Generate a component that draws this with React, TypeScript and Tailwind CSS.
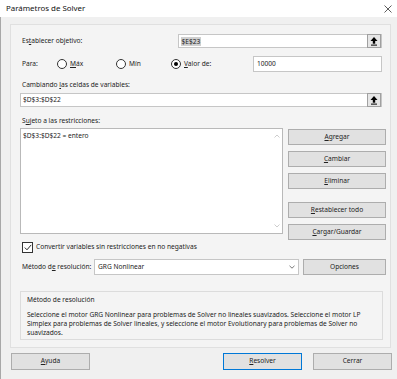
import React from "react";

function U({ children }: { children: React.ReactNode }) {
  return <span className="underline underline-offset-1 decoration-[0.5px]">{children}</span>;
}

function UpArrowBtn() {
  return (
    <div className="w-[14px] h-[14px] border border-[#a0a0a0] bg-[#e6e6e6] flex items-center justify-center shrink-0">
      <svg width="8" height="9" viewBox="0 0 8 9">
        <polygon points="4,0 0.5,4 7.5,4" fill="#000" />
        <rect x="2.8" y="3.5" width="2.4" height="3.2" fill="#000" />
        <rect x="1" y="7.6" width="6" height="1" fill="#000" />
      </svg>
    </div>
  );
}

function Radio({ checked }: { checked?: boolean }) {
  return (
    <div className="w-[10px] h-[10px] rounded-full border border-[#333] bg-white flex items-center justify-center shrink-0">
      {checked && <div className="w-[4px] h-[4px] rounded-full bg-black" />}
    </div>
  );
}

function Btn({ children, className = "" }: { children: React.ReactNode; className?: string }) {
  return (
    <div
      className={
        "h-[16px] bg-[#e1e1e1] border border-[#adadad] flex items-center justify-center " +
        className
      }
    >
      {children}
    </div>
  );
}

export default function App() {
  return (
    <div className="w-[397px] h-[379px] bg-[#f0f0f0] flex flex-col overflow-hidden font-['Noto_Sans',sans-serif] text-[#222] text-[6.6px] leading-none">
      {/* Title bar */}
      <div className="h-[17px] bg-white flex items-center justify-between pl-[6px] pr-[4px] shrink-0">
        <span className="text-[7.9px] text-[#111]">Parámetros de Solver</span>
        <svg width="8" height="8" viewBox="0 0 8 8" className="mr-[1px]">
          <path d="M0.5 0.5 L7.5 7.5 M7.5 0.5 L0.5 7.5" stroke="#333" strokeWidth="0.8" />
        </svg>
      </div>

      {/* Body */}
      <div className="flex-1 flex flex-col border-l border-[#a8a8a8] pl-[9px] pt-[7px]">
        {/* Panel */}
        <div className="w-[381px] h-[324px] border border-[#e0e0e0] bg-[#f4f4f4] flex flex-col pl-[9px] pt-[9px] shrink-0">
          {/* Row 1 */}
          <div className="flex items-center h-[14px]">
            <div className="w-[158px] pl-[2px] whitespace-nowrap">
              <span>
                Es<U>t</U>ablecer objetivo:
              </span>
            </div>
            <div className="w-[204px] h-[14px] border border-[#c6c6c6] bg-white flex items-center justify-between">
              <span className="ml-[2px] bg-[#cfcfcf] px-[0.5px] leading-[9px]">$E$23</span>
              <UpArrowBtn />
            </div>
          </div>

          {/* Row 2 */}
          <div className="flex items-center h-[16px] mt-[8px]">
            <div className="w-[37px] pl-[2px]">Para:</div>
            <Radio />
            <span className="ml-[3px] w-[46px]">
              <U>M</U>áx
            </span>
            <Radio />
            <span className="ml-[3px] w-[42px]">Mín</span>
            <Radio checked />
            <span className="ml-[3px] w-[69px]">
              <U>V</U>alor de:
            </span>
            <div className="w-[129px] h-[16px] border border-[#c6c6c6] bg-white flex items-center pl-[3px]">
              10000
            </div>
          </div>

          {/* Cambiando */}
          <div className="h-[10px] mt-[8px] pl-[2px] flex items-center whitespace-nowrap">
            <span>
              Cambiando <U>l</U>as celdas de variables:
            </span>
          </div>
          <div className="w-[362px] h-[14px] mt-[3px] border border-[#c6c6c6] bg-white flex items-center justify-between">
            <span className="ml-[2px]">$D$3:$D$22</span>
            <UpArrowBtn />
          </div>

          {/* Sujeto */}
          <div className="h-[10px] mt-[9px] pl-[2px] flex items-center whitespace-nowrap">
            <span>
              S<U>u</U>jeto a las restricciones:
            </span>
          </div>
          <div className="flex items-start mt-[2px]">
            <div className="w-[263px] h-[106px] border border-[#b9b9b9] bg-white flex">
              <div className="flex-1 pl-[2px] pt-[4px]">$D$3:$D$22 = entero</div>
              <div className="w-[11px] flex flex-col items-center justify-between py-[5px]">
                <svg width="6" height="4" viewBox="0 0 6 4">
                  <path d="M0.5 3.5 L3 1 L5.5 3.5" stroke="#c0c0c0" strokeWidth="0.8" fill="none" />
                </svg>
                <svg width="6" height="4" viewBox="0 0 6 4">
                  <path d="M0.5 0.5 L3 3 L5.5 0.5" stroke="#c0c0c0" strokeWidth="0.8" fill="none" />
                </svg>
              </div>
            </div>
            <div className="ml-[5px] w-[98px] flex flex-col">
              <Btn className="mt-[1px]">
                <span>
                  <U>A</U>gregar
                </span>
              </Btn>
              <Btn className="mt-[6px]">
                <span>
                  <U>C</U>ambiar
                </span>
              </Btn>
              <Btn className="mt-[6px]">
                <span>
                  <U>E</U>liminar
                </span>
              </Btn>
              <Btn className="mt-[13px]">
                <span>
                  <U>R</U>establecer todo
                </span>
              </Btn>
              <Btn className="mt-[6px]">
                <span>
                  <U>C</U>argar/Guardar
                </span>
              </Btn>
            </div>
          </div>

          {/* Checkbox */}
          <div className="flex items-center h-[11px] mt-[2px] pl-[2px]">
            <div className="w-[11px] h-[11px] border border-[#333] bg-white flex items-center justify-center shrink-0">
              <svg width="8" height="7" viewBox="0 0 8 7">
                <path d="M0.8 3.6 L3 5.8 L7.2 0.9" stroke="#111" strokeWidth="0.9" fill="none" />
              </svg>
            </div>
            <span className="ml-[3px] whitespace-nowrap">Convertir variables sin restricciones en no negativas</span>
          </div>

          {/* Método */}
          <div className="flex items-center h-[16px] mt-[6px]">
            <div className="w-[74px] pl-[2px] whitespace-nowrap">
              <span>
                Método d<U>e</U> resolución:
              </span>
            </div>
            <div className="w-[205px] h-[16px] border border-[#c6c6c6] bg-white flex items-center justify-between">
              <span className="ml-[3px]">GRG Nonlinear</span>
              <div className="w-[13px] h-full flex items-center justify-center">
                <svg width="6" height="4" viewBox="0 0 6 4">
                  <path d="M0.5 0.8 L3 3.2 L5.5 0.8" stroke="#555" strokeWidth="0.8" fill="none" />
                </svg>
              </div>
            </div>
            <Btn className="ml-[4px] w-[83px]">Opciones</Btn>
          </div>

          {/* Group box */}
          <div className="w-[363px] h-[49px] mt-[16px] border border-[#dcdcdc] flex flex-col pl-[6px] pr-[14px] pt-[4px]">
            <div className="h-[8px] flex items-center">Método de resolución</div>
            <div className="mt-[6px] leading-[9px]">
              Seleccione el motor GRG Nonlinear para problemas de Solver no lineales suavizados. Seleccione el motor LP Simplex para problemas de Solver lineales, y seleccione el motor Evolutionary para problemas de Solver no suavizados.
            </div>
          </div>
        </div>

        {/* Bottom buttons */}
        <div className="flex items-center mt-[5px]">
          <div className="ml-[1px] w-[79px] h-[17px] bg-[#e1e1e1] border border-[#adadad] flex items-center justify-center">
            <span>
              <U>A</U>yuda
            </span>
          </div>
          <div className="ml-[133px] w-[79px] h-[17px] bg-[#e1e1e1] border border-[#0078d7] flex items-center justify-center">
            <span>
              <U>R</U>esolver
            </span>
          </div>
          <div className="ml-[11px] w-[79px] h-[17px] bg-[#e1e1e1] border border-[#adadad] flex items-center justify-center">
            Cerrar
          </div>
        </div>
      </div>
    </div>
  );
}
